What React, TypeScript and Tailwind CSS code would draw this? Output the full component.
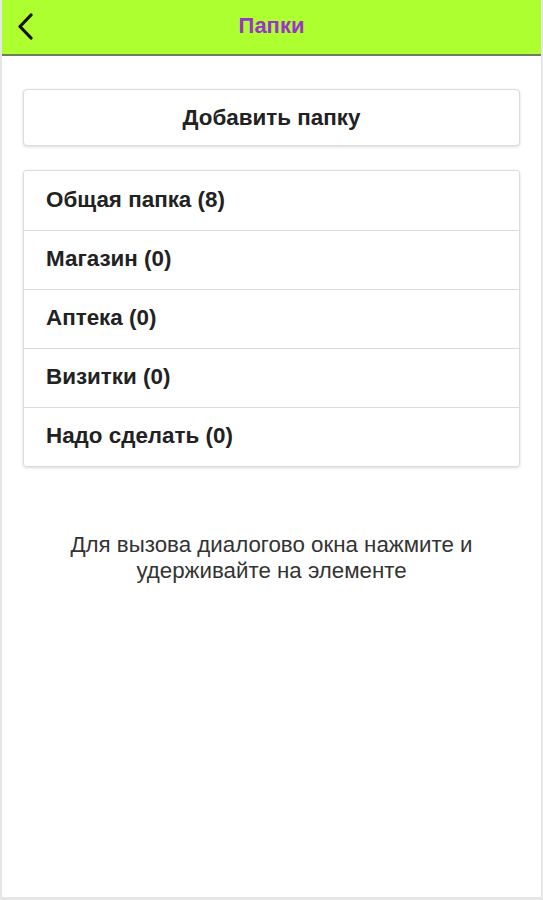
import React from "react";

const items = ["Общая папка (8)", "Магазин (0)", "Аптека (0)", "Визитки (0)", "Надо сделать (0)"];

export default function App() {
  return (
    <div className="w-[543px] h-[900px] bg-white flex flex-col border-x-2 border-b-[3px] border-[#e6e6e6] overflow-hidden font-['Liberation_Sans',Arial,sans-serif]">
      <div className="h-[56px] -mx-[2px] bg-[#adff2f] border-b-2 border-[#6f7f55] relative flex items-center justify-center shrink-0">
        <svg
          className="absolute left-[17px] top-[13px]"
          width="18"
          height="28"
          viewBox="0 0 18 28"
          fill="none"
          stroke="#111"
          strokeWidth="3.2"
          strokeLinecap="round"
          strokeLinejoin="round"
        >
          <path d="M14 2 L3 13.5 L14 25" />
        </svg>
        <span className="text-[22px] font-bold text-[#9b35c9] -mt-[4px]">Папки</span>
      </div>

      <div className="px-[21px] pt-[33px] flex flex-col">
        <button className="h-[57px] w-full bg-white border border-[#dcdcdc] rounded-[4px] shadow-[0_1px_3px_rgba(0,0,0,0.15)] text-[22.4px] font-bold text-[#222] font-['Liberation_Sans',Arial,sans-serif]">
          Добавить папку
        </button>

        <div className="mt-[24px] border border-[#dcdcdc] rounded-[3px] shadow-[0_1px_3px_rgba(0,0,0,0.15)] flex flex-col">
          {items.map((t, i) => (
            <div
              key={t}
              className={`h-[59px] flex items-center pl-[22px] text-[22.4px] font-bold text-[#222] ${
                i > 0 ? "border-t border-[#dcdcdc]" : ""
              }`}
            >
              <span className="-mt-[2px]">{t}</span>
            </div>
          ))}
        </div>

        <p className="mt-[65px] text-center text-[22.3px] leading-[26px] text-[#333]">
          Для вызова диалогово окна нажмите и
          <br />
          удерживайте на элементе
        </p>
      </div>
    </div>
  );
}
